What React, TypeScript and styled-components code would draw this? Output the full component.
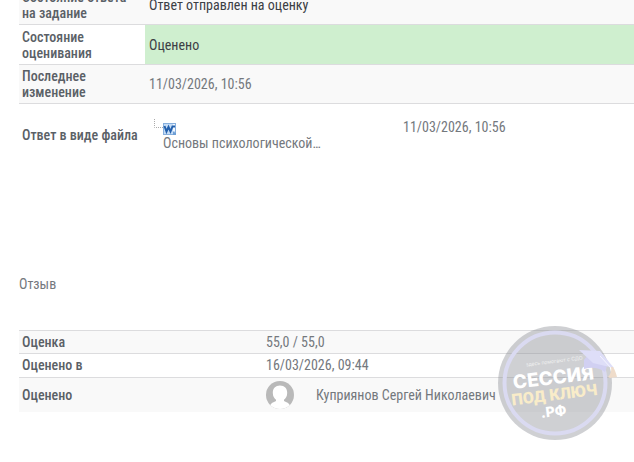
import React from "react";
import styled, { createGlobalStyle } from "styled-components";

const GlobalStyle = createGlobalStyle`
  * { box-sizing: border-box; }
  body {
    margin: 0;
    background: #fff;
    color: #74787d;
    font-family: "Roboto Condensed", Roboto, "Liberation Sans", sans-serif;
    font-size: 14px;
    font-weight: 400;
    line-height: 16px;
    overflow: hidden;
  }
`;

const Page = styled.main`
  margin-top: -16px;
  padding: 0 0 50px 19px;
`;

const Table = styled.table`
  width: 100%;
  border-collapse: collapse;
  table-layout: fixed;
`;

const Row = styled.tr<{ $striped?: boolean; $height: number }>`
  height: ${(p) => p.$height}px;
  border-top: 1px solid #dcdcde;
  background: ${(p) => (p.$striped ? "#f9f9f9" : "#fff")};
`;

const Label = styled.th<{ $width: number }>`
  width: ${(p) => p.$width}px;
  padding: 3px;
  color: #5a6066;
  font-weight: 500;
  text-align: left;
  vertical-align: middle;
`;

const Value = styled.td<{ $tone?: "dark" | "graded" }>`
  padding: 3px 4px;
  vertical-align: middle;
  color: ${(p) => (p.$tone ? "#3c4045" : "inherit")};
  background: ${(p) => (p.$tone === "graded" ? "#cfefcf" : "transparent")};
`;

const FileRow = styled.div`
  display: grid;
  grid-template-columns: 250px 1fr;
  padding-left: 4px;
`;

const FileEntry = styled.div`
  display: grid;
  grid-template-columns: 10px 1fr;
`;

const FileLink = styled.a`
  grid-column: 2;
  color: inherit;
  text-decoration: none;
`;

const FeedbackTitle = styled.h3`
  margin: 110px 0 37px;
  font-size: 14px;
  font-weight: 400;
  line-height: 17px;
`;

const Feedback = styled.section`
  position: relative;
`;

const Grader = styled.div`
  display: flex;
  align-items: center;
  gap: 22px;
`;

const GraderLink = styled.a`
  color: inherit;
  text-decoration: none;
`;

const Stamp = styled.svg`
  position: absolute;
  right: 12px;
  bottom: -29px;
  pointer-events: none;
`;

const Tree = styled.svg`
  display: block;
`;

function TreeLine() {
  return (
    <Tree width="10" height="16" viewBox="0 0 10 16">
      <path d="M1.500 0V8.500H10" fill="none" stroke="#aaa" strokeDasharray="1 1" />
    </Tree>
  );
}

function WordIcon() {
  return (
    <Tree width="13" height="16" viewBox="0 0 13 16">
      <rect x=".5" y="4.500" width="12" height="11" fill="#c5dcf5" stroke="#86afdd" />
      <path d="M10 5h2v7h-2z" fill="#f2f8ff" />
      <path d="M1.500 7 3.500 12.500 5.500 8 7.500 12.500 9.500 7.500H12" fill="none" stroke="#2360ad" strokeWidth="2" />
      <path d="M10 12.500 13 14v2h-3z" fill="#6d9fd6" />
    </Tree>
  );
}

function Avatar() {
  return (
    <svg width="28" height="28" viewBox="0 0 28 28" role="img" aria-label="Фото">
      <defs>
        <clipPath id="avatar-circle"><circle cx="14" cy="14" r="14" /></clipPath>
      </defs>
      <g clipPath="url(#avatar-circle)">
        <rect width="28" height="28" fill="#b9b9b9" />
        <path d="M14 4.500c-4.500 0-7.200 3-7.200 7.300 0 3.600 1.400 5.700 3.200 7v1.200c-2.800 1.200-5 2.300-6 4.500V28h20v-3.500c-1-2.200-3.200-3.300-6-4.500v-1.200c1.800-1.300 3.200-3.400 3.200-7 0-4.300-2.700-7.300-7.200-7.300z" fill="#fff" />
      </g>
    </svg>
  );
}

function SessionStamp() {
  return (
    <Stamp width="124" height="116" viewBox="0 0 124 116" role="img" aria-label="Сессия под ключ .рф">
      <circle cx="57" cy="58" r="57" fill="#868990" fillOpacity=".4" />
      <circle cx="57" cy="58" r="50.500" fill="none" stroke="#dadaf1" strokeWidth="4" />
      <g transform="rotate(-7 57 58)" fontFamily="Inter, Roboto, sans-serif" textAnchor="middle">
        <text x="59" y="38" fontSize="5" fill="#f0f0f1">здесь помогают с СДО</text>
        <text x="56" y="59" fontSize="19" fontWeight="800" fill="#fff">СЕССИЯ</text>
        <text x="55" y="75" fontSize="16" fontWeight="900" fontFamily="Roboto, sans-serif" fill="#f9ecc9">ПОД КЛЮЧ</text>
        <text x="52" y="91" fontSize="14" fontWeight="800" fill="#fff">.РФ</text>
      </g>
      <path d="M86 35c2-3 4-5 5-5l18 5c0 4 0 8-2 12-7-5-14-5-21-3z" fill="#d1d0f2" />
      <path d="M81 25l21 1 14 17-21-5z" fill="#dedef8" />
      <path d="M102 31l12 13" stroke="#f5f5ff" strokeWidth="1" />
      <path d="M113 42c1 4-1 8-3 10l2 1 7-1c-1-4-2-7-4-10z" fill="#efdcca" />
    </Stamp>
  );
}

export default function App() {
  return (
    <>
      <GlobalStyle />
      <Page>
        <Table>
          <tbody>
            <Row $striped $height={40}>
              <Label scope="row" $width={126}>Состояние ответа на задание</Label>
              <Value $tone="dark">Ответ отправлен на оценку</Value>
            </Row>
            <Row $height={40}>
              <Label scope="row" $width={126}>Состояние оценивания</Label>
              <Value $tone="graded">Оценено</Value>
            </Row>
            <Row $striped $height={39}>
              <Label scope="row" $width={126}>Последнее изменение</Label>
              <Value>11/03/2026, 10:56</Value>
            </Row>
            <Row $height={62}>
              <Label scope="row" $width={126}>Ответ в виде файла</Label>
              <Value>
                <FileRow>
                  <FileEntry>
                    <TreeLine />
                    <WordIcon />
                    <FileLink href="#file">Основы психологической…</FileLink>
                  </FileEntry>
                  <time>11/03/2026, 10:56</time>
                </FileRow>
              </Value>
            </Row>
          </tbody>
        </Table>
        <Feedback>
          <FeedbackTitle>Отзыв</FeedbackTitle>
          <Table>
            <tbody>
              <Row $striped $height={23}>
                <Label scope="row" $width={243}>Оценка</Label>
                <Value>55,0 / 55,0</Value>
              </Row>
              <Row $height={24}>
                <Label scope="row" $width={243}>Оценено в</Label>
                <Value>16/03/2026, 09:44</Value>
              </Row>
              <Row $striped $height={35}>
                <Label scope="row" $width={243}>Оценено</Label>
                <Value>
                  <Grader>
                    <Avatar />
                    <GraderLink href="#grader">Куприянов Сергей Николаевич</GraderLink>
                  </Grader>
                </Value>
              </Row>
            </tbody>
          </Table>
          <SessionStamp />
        </Feedback>
      </Page>
    </>
  );
}
